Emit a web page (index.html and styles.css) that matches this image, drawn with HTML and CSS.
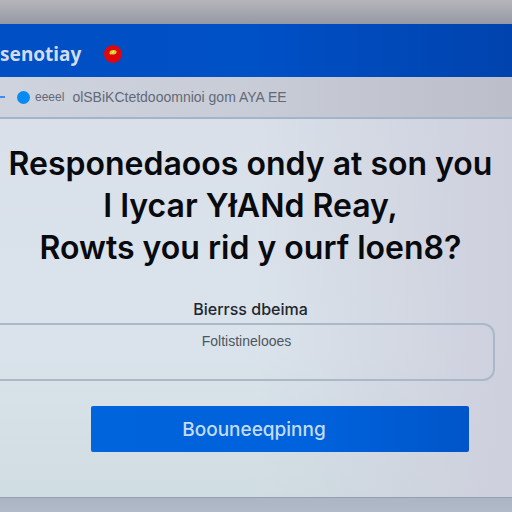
FILE: index.html
```html
<!DOCTYPE html>
<html lang="en">
<head>
    <meta charset="UTF-8">
    <meta name="viewport" content="width=device-width, initial-scale=1.0">
    <title>senotiay</title>
    <link rel="stylesheet" href="styles.css">
</head>
<body>
    <div class="window">
        <header class="header">
            <span class="brand">senotiay</span>
            <svg class="badge" width="18" height="18" viewBox="0 0 18 18" aria-hidden="true">
                <circle cx="9" cy="9" r="9" fill="#e0060c"/>
                <path d="M5.500 8C5.500 6 7 5 9.500 5C12 5 13 6 12.500 7.500C12 9.500 9 10 7.500 9.300C6.500 10 5.500 9.300 5.500 8Z" fill="#c9d92c"/>
                <path d="M8 7.500L10 6.500" fill="none" stroke="#f4f58a"/>
            </svg>
        </header>

        <nav class="toolbar">
            <span class="dash"></span>
            <span class="dot"></span>
            <span class="tag">eeeel</span>
            <span class="path">olSBiKCtetdooomnioi gom AYA EE</span>
        </nav>

        <main class="content">
            <h1>Responedaoos ondy at son you<br>I Iycar YłANd Reay,<br>Rowts you rid y ourf loen8?</h1>
            <form>
                <label for="answer">Bierrss dbeima</label>
                <input type="text" id="answer" placeholder="Foltistinelooes">
                <button type="button">Boouneeqpinng</button>
            </form>
        </main>
    </div>
</body>
</html>
```
FILE: styles.css
```css
* {
    box-sizing: border-box;
}
body {
    margin: 0;
    font-family: Inter, "Liberation Sans", sans-serif;
    background: linear-gradient(#b5b6bb, #9699a4 24px, #aab3c3 96%, #b0bac8);
}
.window {
    display: flex;
    flex-direction: column;
    min-height: 100vh;
    padding: 24px 0 14px;
}
.header {
    display: flex;
    align-items: center;
    gap: 23px;
    height: 53px;
    padding-top: 6px;
    background: linear-gradient(to right, #004fc4, #0050c6 50%, #0043ae);
}
.brand {
    font-family: "Noto Sans", sans-serif;
    font-size: 19px;
    font-weight: 700;
    color: #d3dcec;
}
.toolbar {
    display: flex;
    align-items: center;
    height: 42px;
    border-bottom: 2px solid #a3b3ca;
    background: linear-gradient(to right, #cfd3de, #c8ccd7 50%, #bcbec9);
    font-family: "Liberation Sans", sans-serif;
    color: #626a78;
}
.dash {
    width: 5px;
    height: 2px;
    background: #3f8df0;
}
.dot {
    width: 13px;
    height: 13px;
    margin: 0 5px 0 12px;
    border-radius: 50%;
    background: #078bf3;
}
.tag {
    font-size: 12px;
}
.path {
    margin-left: 8px;
    font-size: 14px;
}
.content {
    flex: 1;
    padding: 24px 17px 0 0;
    background: linear-gradient(to right, rgba(206, 208, 221, 0) 50%, #ced0dd), linear-gradient(#d9e0ea, #dae3eb 60%, #d0dde2);
    border-bottom: 1px solid #949fb0;
}
h1 {
    margin: 0 0 30px;
    padding-left: 6px;
    font-size: 32px;
    font-weight: 600;
    line-height: 42px;
    text-align: center;
    white-space: nowrap;
    color: #080a0e;
}
form {
    display: flex;
    flex-direction: column;
}
label {
    align-self: center;
    padding-left: 6px;
    font-size: 16px;
    font-weight: 500;
    line-height: 20px;
    color: #22262e;
}
input {
    width: 100%;
    height: 58px;
    margin-top: 4px;
    padding: 0 0 22px;
    border: 2px solid #aab9c8;
    border-left: 0;
    border-radius: 0 12px 12px 0;
    background: transparent;
    font-family: "Liberation Sans", sans-serif;
    font-size: 14px;
    text-align: center;
}
input::placeholder {
    color: #4d565f;
    opacity: 1;
}
button {
    height: 46px;
    margin: 25px 26px 0 91px;
    padding: 0 52px 0 0;
    border: 0;
    border-radius: 2px;
    background: linear-gradient(to right, #0064dc, #0062dc 60%, #0055c9);
    font-family: Inter, "Liberation Sans", sans-serif;
    font-size: 19px;
    font-weight: 500;
    color: #c4dcf5;
}
```
